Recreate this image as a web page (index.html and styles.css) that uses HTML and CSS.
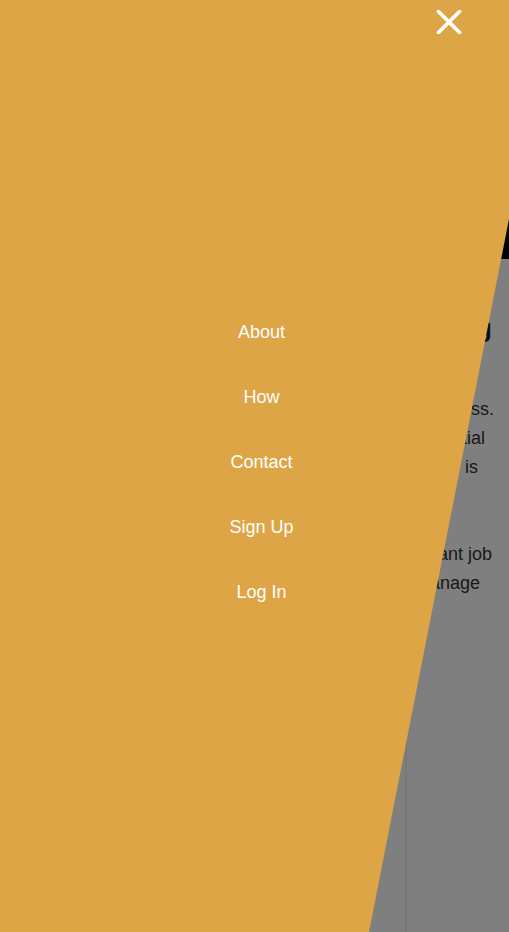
FILE: index.html
```html
<!DOCTYPE html>
<html lang="en">
<head>
<meta charset="utf-8">
<title>Menu</title>
<link rel="stylesheet" href="styles.css">
</head>
<body>
<div class="page">
  <header class="site-header"></header>
  <main class="content">
    <h1 class="headline">Start hiring</h1>
    <div class="para">
      <p class="block">
        <span class="ln l1">your business.</span>
        <span class="ln l2">every potential</span>
        <span class="ln l3">customer&ensp;is</span>
      </p>
      <p class="block">
        <span class="ln l5">a relevant job</span>
        <span class="ln l6">and manage</span>
      </p>
    </div>
    <div class="card"></div>
  </main>
</div>
<div class="dim"></div>
<nav class="drawer">
  <button class="close" aria-label="Close">
    <svg width="26" height="24" viewBox="0 0 26 24"><path d="M2.5 1.5 L23.5 22.5 M23.5 1.5 L2.5 22.5" stroke="#fff" stroke-width="3.8" stroke-linecap="round"/></svg>
  </button>
  <ul class="menu">
    <li><a href="#">About</a></li>
    <li><a href="#">How</a></li>
    <li><a href="#">Contact</a></li>
    <li><a href="#">Sign Up</a></li>
    <li><a href="#">Log In</a></li>
  </ul>
</nav>
</body>
</html>
```
FILE: styles.css
```css
* { box-sizing: border-box; }
html, body { margin: 0; padding: 0; }
body {
  width: 509px;
  height: 932px;
  overflow: hidden;
  background: #fff;
  font-family: "Liberation Sans", Arial, sans-serif;
}
.page { width: 509px; }
.site-header { height: 259px; background: #000; }
.content { position: relative; padding: 52px 17px 0 0; height: 673px; }
.headline {
  margin: 0;
  text-align: right;
  font-size: 26px;
  line-height: 34px;
  font-weight: 700;
  color: #1b2033;
  white-space: nowrap;
}
.para {
  margin-top: 50px;
  display: flex;
  flex-direction: column;
  gap: 58px;
  font-size: 18px;
  line-height: 29px;
  color: #333;
}
.block { margin: 0; display: flex; flex-direction: column; }
.ln { display: block; text-align: right; white-space: nowrap; }
.l1 { margin-right: -2px; }
.l2 { margin-right: 7px; }
.l3 { margin-right: 14px; }
.l5 { margin-right: 0; }
.l6 { margin-right: 12px; }
.card {
  position: absolute;
  left: 406px;
  top: 481px;
  width: 103px;
  bottom: 0;
  border-left: 1px solid rgba(0,0,0,0.08);
  box-shadow: -1px 0 2px rgba(0,0,0,0.05);
}
.dim {
  position: fixed;
  inset: 0;
  background: rgba(0,0,0,0.5);
}
.drawer {
  position: fixed;
  inset: 0;
  background: #dea546;
  clip-path: polygon(0 0, 100% 0, 100% 219px, 369px 100%, 0 100%);
}
.close {
  position: absolute;
  top: 10px;
  left: 436px;
  width: 26px;
  height: 24px;
  padding: 0;
  border: 0;
  background: none;
  display: flex;
}
.menu {
  list-style: none;
  margin: 0;
  padding: 300px 0 0;
  display: flex;
  flex-direction: column;
  align-items: center;
}
.menu li {
  height: 65px;
  display: flex;
  align-items: center;
  padding-left: 14px;
}
.menu a {
  color: #fff;
  text-decoration: none;
  font-size: 18px;
}
```
